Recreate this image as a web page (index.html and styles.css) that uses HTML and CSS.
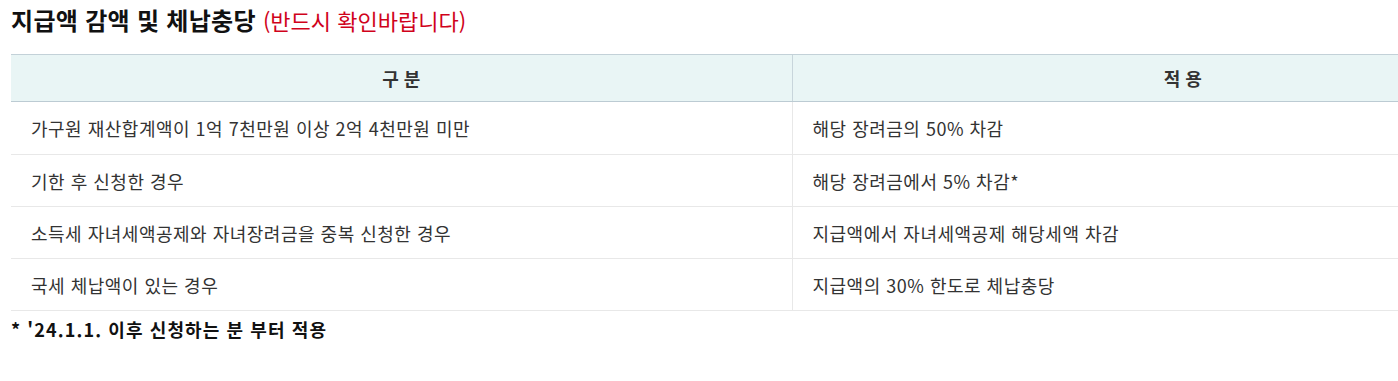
FILE: index.html
```html
<!DOCTYPE html>
<html lang="ko">
<head>
<meta charset="utf-8">
<link rel="stylesheet" href="styles.css">
</head>
<body>
<div class="page">
  <h3 class="title">지급액 감액 및 체납충당 <span class="warn">(반드시 확인바랍니다)</span></h3>
  <table class="tbl">
    <thead>
      <tr><th>구 분</th><th>적 용</th></tr>
    </thead>
    <tbody>
      <tr><td>가구원 재산합계액이 1억 7천만원 이상 2억 4천만원 미만</td><td>해당 장려금의 50% 차감</td></tr>
      <tr><td>기한 후 신청한 경우</td><td>해당 장려금에서 5% 차감*</td></tr>
      <tr><td>소득세 자녀세액공제와 자녀장려금을 중복 신청한 경우</td><td>지급액에서 자녀세액공제 해당세액 차감</td></tr>
      <tr><td>국세 체납액이 있는 경우</td><td>지급액의 30% 한도로 체납충당</td></tr>
    </tbody>
  </table>
  <p class="note">* '24.1.1. 이후 신청하는 분 부터 적용</p>
</div>
</body>
</html>
```
FILE: styles.css
```css
html, body {
  margin: 0;
  padding: 0;
  overflow: hidden;
  background: #fff;
}
body {
  font-family: "Noto Sans CJK KR", "Noto Sans", sans-serif;
  color: #333;
}
.page {
  padding: 0 0 0 11px;
  width: 1562px;
}
.title {
  margin: 0;
  padding-top: 5px;
  height: 54px;
  box-sizing: border-box;
  font-size: 24px;
  line-height: 30px;
  font-weight: 700;
  color: #111;
  letter-spacing: 0.3px;
}
.warn {
  font-size: 22px;
  font-weight: 400;
  color: #d0021b;
  letter-spacing: 0;
}
.tbl {
  width: 1562px;
  border-collapse: collapse;
  table-layout: fixed;
  border-top: 1px solid #000;
}
.tbl th {
  height: 46px;
  padding: 0;
  background: #e9f5f5;
  border-top: 1px solid #c3d1d8;
  border-bottom: 1px solid #bccbd3;
  font-size: 18px;
  font-weight: 700;
  color: #333;
  text-align: center;
}
.tbl th + th {
  border-left: 1px solid #c8d5db;
}
.tbl td {
  height: 51px;
  padding: 0 0 0 20px;
  border-bottom: 1px solid #e8e8e8;
  font-size: 18px;
  color: #333;
  letter-spacing: 0.5px;
  vertical-align: middle;
}
.tbl tbody tr:first-child td {
  height: 52px;
}
.tbl td + td {
  border-left: 1px solid #e8e8e8;
}
.note {
  margin: 5px 0 0;
  font-size: 18px;
  line-height: 26px;
  font-weight: 700;
  color: #111;
  letter-spacing: 1.1px;
}
```
